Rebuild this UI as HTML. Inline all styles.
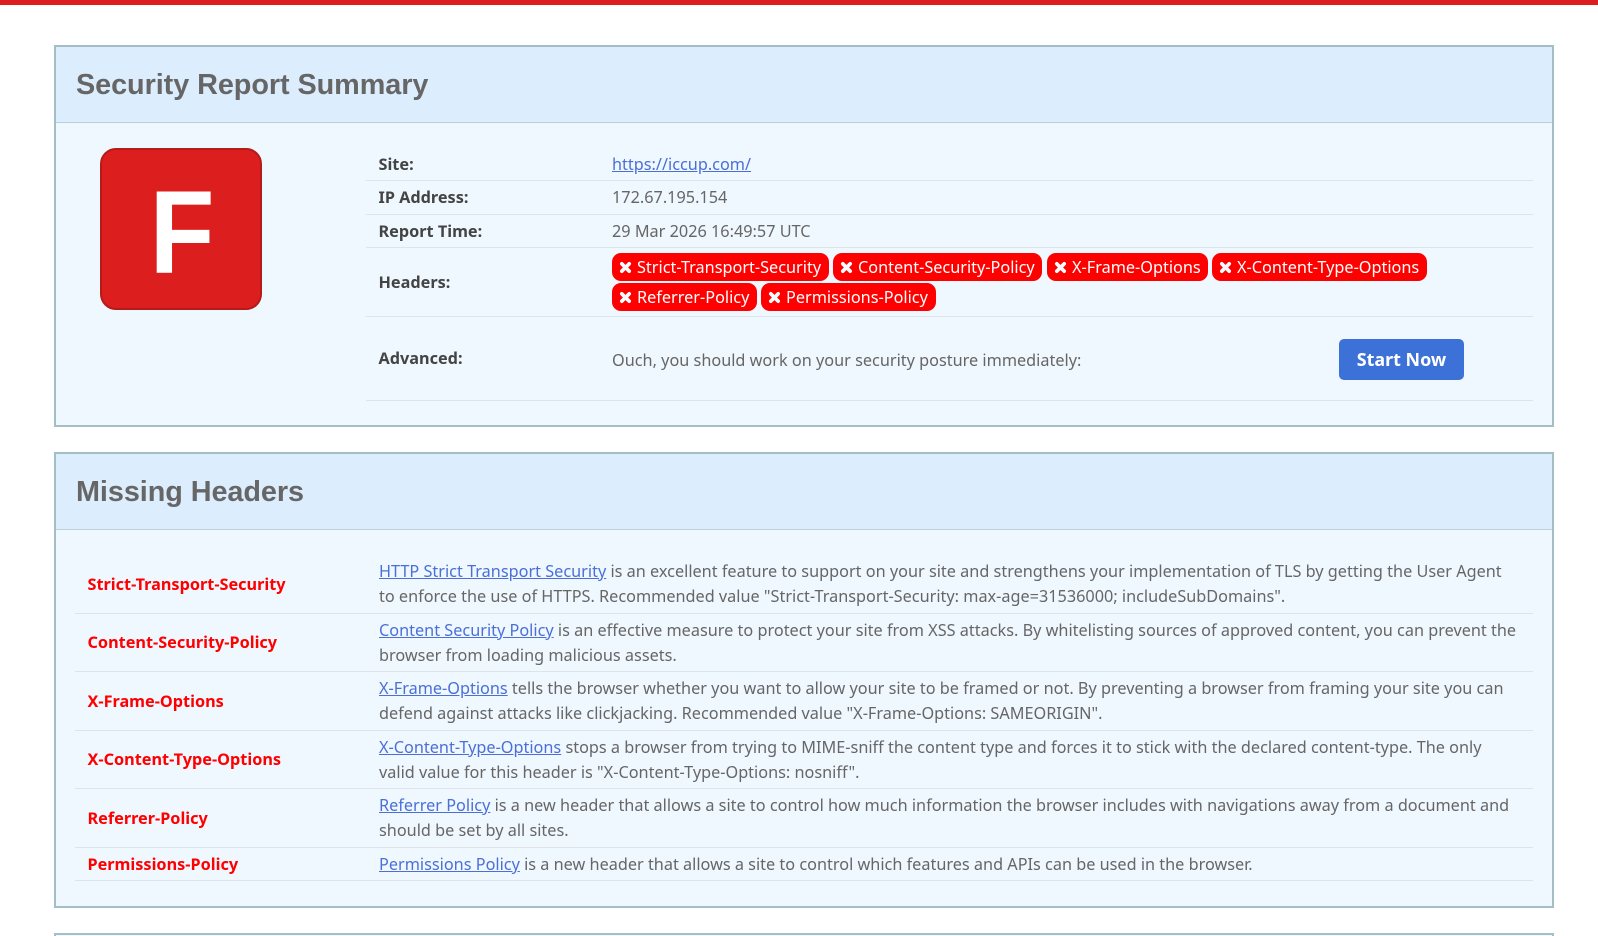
<!DOCTYPE html>
<html lang="en"><head><meta charset="utf-8"><title>Security Report Summary</title>
<style>
*{box-sizing:border-box}
html,body{margin:0;padding:0;background:#fff;width:1598px;height:936px;overflow:hidden}
body{font-family:"Noto Sans","Open Sans","DejaVu Sans",sans-serif;font-size:16.25px;color:#666;position:relative}
.top{position:absolute;left:0;top:0;width:1598px;height:5px;background:#de1e1e}
.box{position:absolute;left:54px;width:1500px;border:2px solid #a4bec5;background:#eff7ff}
.hd{position:absolute;left:0;top:0;width:1496px;height:76px;background:#dcedfd;border-bottom:1px solid #b9d0d8}
.hd h2{margin:0;position:absolute;left:20px;top:19px;font:bold 28.8px/38px "Liberation Sans",sans-serif;color:#666;letter-spacing:-.06px}
.grade{position:absolute;left:100px;top:148px;width:162px;height:162px;background:#dc1e1e;border:2px solid #b51b1b;border-radius:16px;color:#fff;font:bold 118px/166px "Liberation Sans",sans-serif;text-align:center}
.grade span{display:inline-block;transform:scaleX(.9);position:relative;left:1px}
.ln{position:absolute;height:1px;background:#dfe4e8}
.t{position:absolute;white-space:nowrap;line-height:25px}
.l{font-weight:700;color:#444}
.r{font-weight:700;color:#f00}
a{color:#4a6fd8;text-decoration:underline}
.b{position:absolute;height:28px;background:#f00;color:#fff;border-radius:9px;white-space:nowrap;line-height:28px;padding-left:25px}
.b svg{position:absolute;left:7px;top:7.5px;width:13px;height:13px}
.btn{position:absolute;left:1339px;top:339px;width:125px;height:41px;background:#3c72d8;border-radius:5px;color:#fff;font-weight:700;font-size:17.9px;line-height:43px;text-align:center}
</style></head><body>
<div class="top"></div>
<div class="box" style="top:45px;height:382px"><div class="hd"><h2>Security Report Summary</h2></div></div>
<div class="box" style="top:452px;height:456px"><div class="hd"><h2>Missing Headers</h2></div></div>
<div class="box" style="top:933px;height:20px"></div>
<div class="grade"><span>F</span></div>

<div class="t l" style="left:378.5px;top:152px">Site:</div>
<div class="t" style="left:612px;top:152px"><a href="#">https://iccup.com/</a></div>
<div class="ln" style="left:366px;top:180px;width:1167px"></div>
<div class="t l" style="left:378.5px;top:185px">IP Address:</div>
<div class="t" style="left:612px;top:185px">172.67.195.154</div>
<div class="ln" style="left:366px;top:214px;width:1167px"></div>
<div class="t l" style="left:378.5px;top:219px">Report Time:</div>
<div class="t" style="left:612px;top:219px">29 Mar 2026 16:49:57 UTC</div>
<div class="ln" style="left:366px;top:247px;width:1167px"></div>
<div class="t l" style="left:378.5px;top:270px">Headers:</div>
<div class="b" style="left:612px;top:253px;width:217px"><svg viewBox="0 0 13 13"><path d="M2.8 2.8L10.2 10.2M10.2 2.8L2.8 10.2" stroke="#fff" stroke-width="3.6" stroke-linecap="round"/></svg>Strict-Transport-Security</div>
<div class="b" style="left:833px;top:253px;width:209px"><svg viewBox="0 0 13 13"><path d="M2.8 2.8L10.2 10.2M10.2 2.8L2.8 10.2" stroke="#fff" stroke-width="3.6" stroke-linecap="round"/></svg>Content-Security-Policy</div>
<div class="b" style="left:1047px;top:253px;width:161px;padding-left:25px"><svg viewBox="0 0 13 13"><path d="M2.8 2.8L10.2 10.2M10.2 2.8L2.8 10.2" stroke="#fff" stroke-width="3.6" stroke-linecap="round"/></svg>X-Frame-Options</div>
<div class="b" style="left:1212px;top:253px;width:215px;padding-left:25px"><svg viewBox="0 0 13 13"><path d="M2.8 2.8L10.2 10.2M10.2 2.8L2.8 10.2" stroke="#fff" stroke-width="3.6" stroke-linecap="round"/></svg>X-Content-Type-Options</div>
<div class="b" style="left:612px;top:283px;width:145px"><svg viewBox="0 0 13 13"><path d="M2.8 2.8L10.2 10.2M10.2 2.8L2.8 10.2" stroke="#fff" stroke-width="3.6" stroke-linecap="round"/></svg>Referrer-Policy</div>
<div class="b" style="left:761px;top:283px;width:175px"><svg viewBox="0 0 13 13"><path d="M2.8 2.8L10.2 10.2M10.2 2.8L2.8 10.2" stroke="#fff" stroke-width="3.6" stroke-linecap="round"/></svg>Permissions-Policy</div>
<div class="ln" style="left:366px;top:316px;width:1167px"></div>
<div class="t l" style="left:378.5px;top:346px">Advanced:</div>
<div class="t" style="left:612px;top:348px">Ouch, you should work on your security posture immediately:</div>
<div class="btn">Start Now</div>
<div class="ln" style="left:366px;top:400px;width:1167px"></div>

<div class="t r" style="left:87.5px;top:572px">Strict-Transport-Security</div>
<div class="t" style="left:379px;top:559px"><a href="#">HTTP Strict Transport Security</a> is an excellent feature to support on your site and strengthens your implementation of TLS by getting the User Agent</div>
<div class="t" style="left:379px;top:584px">to enforce the use of HTTPS. Recommended value "Strict-Transport-Security: max-age=31536000; includeSubDomains".</div>
<div class="ln" style="left:75px;top:613px;width:1458px"></div>
<div class="t r" style="left:87.5px;top:630px">Content-Security-Policy</div>
<div class="t" style="left:379px;top:618px"><a href="#">Content Security Policy</a> is an effective measure to protect your site from XSS attacks. By whitelisting sources of approved content, you can prevent the</div>
<div class="t" style="left:379px;top:643px">browser from loading malicious assets.</div>
<div class="ln" style="left:75px;top:671px;width:1458px"></div>
<div class="t r" style="left:87.5px;top:689px">X-Frame-Options</div>
<div class="t" style="left:379px;top:676px"><a href="#">X-Frame-Options</a> tells the browser whether you want to allow your site to be framed or not. By preventing a browser from framing your site you can</div>
<div class="t" style="left:379px;top:701px">defend against attacks like clickjacking. Recommended value "X-Frame-Options: SAMEORIGIN".</div>
<div class="ln" style="left:75px;top:730px;width:1458px"></div>
<div class="t r" style="left:87.5px;top:747px">X-Content-Type-Options</div>
<div class="t" style="left:379px;top:735px"><a href="#">X-Content-Type-Options</a> stops a browser from trying to MIME-sniff the content type and forces it to stick with the declared content-type. The only</div>
<div class="t" style="left:379px;top:760px">valid value for this header is "X-Content-Type-Options: nosniff".</div>
<div class="ln" style="left:75px;top:788px;width:1458px"></div>
<div class="t r" style="left:87.5px;top:806px">Referrer-Policy</div>
<div class="t" style="left:379px;top:793px"><a href="#">Referrer Policy</a> is a new header that allows a site to control how much information the browser includes with navigations away from a document and</div>
<div class="t" style="left:379px;top:818px">should be set by all sites.</div>
<div class="ln" style="left:75px;top:847px;width:1458px"></div>
<div class="t r" style="left:87.5px;top:852px">Permissions-Policy</div>
<div class="t" style="left:379px;top:852px"><a href="#">Permissions Policy</a> is a new header that allows a site to control which features and APIs can be used in the browser.</div>
<div class="ln" style="left:75px;top:880px;width:1458px"></div>
</body></html>
